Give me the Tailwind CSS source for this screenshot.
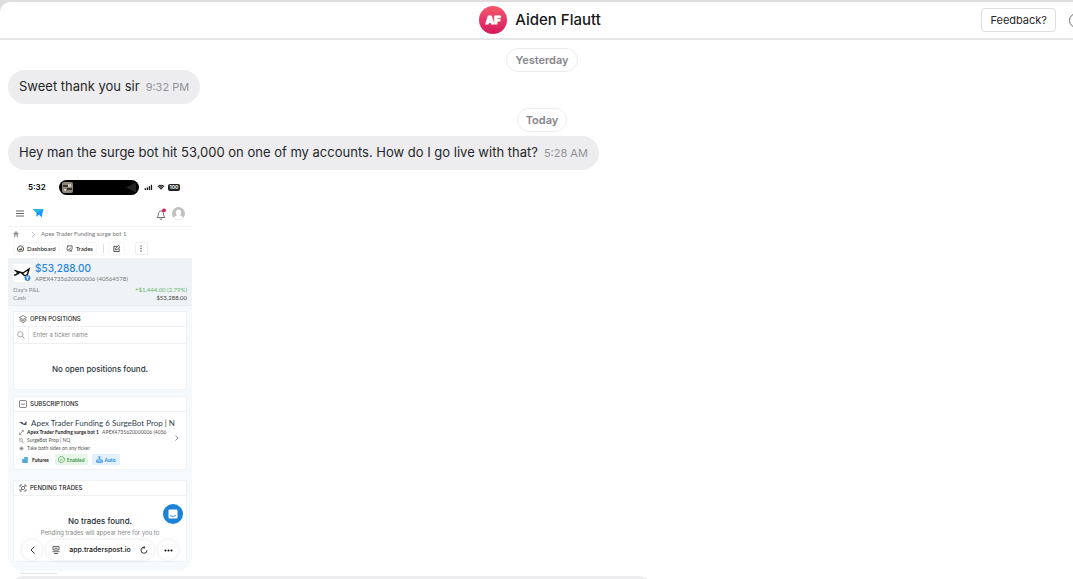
<!DOCTYPE html>
<html lang="en">
<head>
<meta charset="utf-8">
<meta name="viewport" content="width=device-width, initial-scale=1">
<title>Aiden Flautt</title>
<script src="https://cdn.jsdelivr.net/npm/@tailwindcss/browser@4"></script>
</head>
<body class="h-screen overflow-hidden bg-[#dedede] pt-[2px] font-['Inter',sans-serif] text-[#27272a]">
<div class="-mr-[11px] flex h-full flex-col overflow-hidden rounded-tl-[10px] bg-white">
  <header class="grid h-[38px] shrink-0 grid-cols-[1fr_auto_1fr] items-center border-b-2 border-[#e6e6e6]">
    <div></div>
    <div class="flex items-center gap-2 pr-1">
      <svg class="size-7" viewBox="0 0 28 28" role="img" aria-label="AF"><defs><linearGradient id="avatar" x2="0" y2="1"><stop stop-color="#f4586c"/><stop offset="1" stop-color="#d6195f"/></linearGradient></defs><circle cx="14" cy="14" r="14" fill="url(#avatar)"/><text x="14" y="18" text-anchor="middle" font-size="11" font-weight="900" fill="#fff" stroke="#fff" stroke-width=".8" stroke-linejoin="round">AF</text></svg>
      <h1 class="text-[15px] font-medium text-[#18181b]">Aiden Flautt</h1>
    </div>
    <div class="flex items-center justify-end gap-[13px]">
      <button class="h-6 rounded border border-[#dedede] px-2 text-[11px]">Feedback?</button>
      <button aria-label="Information" class="size-[15px] rounded-full border-[1.5px] border-[#707070]"></button>
    </div>
  </header>

  <main class="flex min-h-0 flex-1 flex-col items-start overflow-hidden pt-2 pl-2">
    <div class="flex h-[22px] w-full shrink-0 pr-2"><span class="m-auto flex h-6 items-center rounded-full border border-[#ececec] px-2 text-[11px] font-semibold text-[#85858a]">Yesterday</span></div>
    <div class="flex h-[34px] shrink-0 items-center gap-[6px] rounded-[17px] bg-[#ededef] px-[11px]">
      <p class="text-[13px]">Sweet thank you sir</p><time class="pt-px text-[11px] text-[#929297]">9:32 PM</time>
    </div>
    <div class="mt-1 flex h-7 w-full shrink-0 pr-2"><span class="mx-auto mt-auto mb-1 flex h-6 items-center rounded-full border border-[#ececec] px-2 text-[11px] font-semibold text-[#85858a]">Today</span></div>
    <div class="flex h-[34px] shrink-0 items-center gap-[6px] rounded-[17px] bg-[#ededef] px-[11px]">
      <p class="text-[13px]">Hey man the surge bot hit 53,000 on one of my accounts. How do I go live with that?</p><time class="pt-px text-[11px] text-[#929297]">5:28 AM</time>
    </div>

    <article class="mt-[2px] flex h-[399px] w-[184px] shrink-0 flex-col overflow-hidden rounded-[14px] bg-[#f7fafd] text-[6px] leading-[8px] text-[#555]">
      <div class="bg-white">
        <div class="flex h-[30px] items-center pr-3 pl-5">
          <span class="w-[31px] shrink-0 text-[8px] font-semibold text-black">5:32</span>
          <div class="flex h-[15px] w-20 shrink-0 items-center justify-between rounded-full bg-black px-[3px]">
            <svg class="size-[11px]" viewBox="0 0 11 11"><rect width="11" height="11" rx="2" fill="#8f8779"/><path d="M1 3h5v2H1zM5 6h5v2H5z" fill="#38352f"/><path d="M6 2h3v3H6zM2 7h2v2H2z" fill="#d0c6b5"/></svg>
            <svg class="h-[9px] w-[10px]" viewBox="0 0 10 9" stroke="#555" stroke-width=".8"><path d="M1 4v1M3 3v3M5 2v5M7 1v7M9 0v9"/></svg>
          </div>
          <svg class="ml-[5px] h-[6px] w-[9px] shrink-0" viewBox="0 0 9 7" fill="#111"><path d="M0 5h1.500v2H0zM2.400 4h1.500v3H2.400zM4.800 2.500h1.500v4.500H4.800zM7.200 1h1.500v6H7.200z"/></svg>
          <svg class="ml-1 h-[6px] w-2 shrink-0" viewBox="0 0 8 7"><path d="M0 2.500a5.500 5.500 0 0 1 8 0L4 6.800z" fill="#222"/><path d="M1 3.600a4.300 4.300 0 0 1 6 0M2.300 4.900a2.600 2.600 0 0 1 3.400 0" fill="none" stroke="#fff" stroke-width=".5"/></svg>
          <span class="ml-[3px] flex h-[7px] w-[12px] shrink-0 items-center justify-center rounded-[2px] bg-[#222] text-[5px] font-bold text-white">100</span>
        </div>
        <div class="flex h-[25px] items-center border-b border-[#f2f2f2] pr-[7px] pb-px pl-2">
          <svg class="h-[7px] w-[8px]" viewBox="0 0 8 7" stroke="#555"><path d="M0 1h8M0 3.500h8M0 6h8" stroke-width=".9"/></svg>
          <svg class="ml-[9px] h-[9px] w-[11px]" viewBox="0 0 11 9"><path d="M0 0h10.500L8.500 8.500 6 5.500 3.500 8V4z" fill="#2196f3"/><path d="M0 0h10.500L3.500 4z" fill="#22b8e8"/></svg>
          <svg class="ml-auto h-[12px] w-[11px]" viewBox="0 0 11 12"><path d="M1 9.500c1.200-1 1.200-2 1.400-3.500C2.600 4 3.500 3 5 3s2.500 1 2.600 3c.1 1.500.2 2.500 1.400 3.500zM4 10.500a1 1 0 0 0 2 0" fill="none" stroke="#555" stroke-width=".8"/><circle cx="8" cy="2.300" r="1.900" fill="#e11d55"/></svg>
          <svg class="ml-[5px] size-[13px]" viewBox="0 0 13 13"><circle cx="6.500" cy="6.500" r="6.500" fill="#c1c1c1"/><path d="M6.500 2.500a2.800 3 0 0 1 2 5c-.4.700 0 1.200 1.800 2l.8 1.300a6.500 6.500 0 0 1-9.200 0l.8-1.300c1.800-.8 2.200-1.300 1.800-2a2.800 3 0 0 1 2-5" fill="#fff"/></svg>
        </div>
        <nav class="flex h-[14px] items-center pl-[5px] font-['Lato',sans-serif] text-[#777]">
          <svg class="size-[6px]" viewBox="0 0 6 6"><path d="M0 3l3-3 3 3H5v3H3.700V4H2.300v2H1V3z" fill="#999"/></svg>
          <svg class="ml-[13px] h-[5px] w-[3px]" viewBox="0 0 3 5"><path d="M0 0l2.500 2.500L0 5" fill="none" stroke="#aaa" stroke-width=".7"/></svg>
          <a href="#" class="ml-[6px]">Apex Trader Funding surge bot 1</a>
        </nav>
        <div class="flex h-[17px] items-center pb-[2px] pl-[5px] font-['Lato',sans-serif] font-medium text-[#222]">
          <button class="flex h-[13px] items-center gap-[3px] rounded-xs border border-[#f6f6f6] px-[3px]"><svg class="size-[7px]" viewBox="0 0 8 8"><path d="M1.500 7a3.500 3.500 0 1 1 5 0zM4 5l1.500-2M2 5h4" fill="none" stroke="#222" stroke-width=".9"/></svg>Dashboard</button>
          <button class="ml-[2px] flex h-[13px] items-center gap-[3px] rounded-xs border border-[#f6f6f6] px-[3px]"><svg class="size-[7px]" viewBox="0 0 8 8"><path d="M7 4a3 3 0 1 1-3-3h3v3M1 1h2M5 7h2M2.500 4.500l1 1 2-2.500" fill="none" stroke="#333" stroke-width=".8"/></svg>Trades</button>
          <span class="ml-[6px] h-[9px] w-px bg-[#ddd]"></span>
          <button aria-label="Edit" class="ml-1 flex h-[13px] w-[17px] items-center justify-center rounded-xs border border-[#f6f6f6]"><svg class="size-[7px]" viewBox="0 0 8 8"><path d="M4.500 1.500H1v6h6V4M3 5.500V4l3.500-3.500L8 2 4.500 5.500z" fill="none" stroke="#222" stroke-width=".9"/></svg></button>
          <button aria-label="More" class="ml-[10px] flex h-[13px] w-[13px] items-center justify-center rounded-xs border border-[#eee]"><svg class="h-[7px] w-[2px]" viewBox="0 0 2 7" fill="#444"><circle cx="1" cy="1" r=".7"/><circle cx="1" cy="3.500" r=".7"/><circle cx="1" cy="6" r=".7"/></svg></button>
        </div>
      </div>
      <section class="h-[48px] shrink-0 border-b border-[#e8edf1] bg-[#eff3f6] px-[5px] pt-[4px] font-['Lato',sans-serif]">
        <div class="flex gap-1">
          <div class="mt-[2px] size-[18px] rounded-xs bg-white">
            <svg viewBox="0 0 18 18"><path d="M1 11c3 1 4-4 7-2.500 2 1 3 4 5 3 2-.5 2-3 3-6.500l-6 4-7-2 3 3" fill="none" stroke="#111" stroke-width="1.500"/><circle cx="14.500" cy="14" r="3" fill="#3c87d8"/><path d="M13 13h3M14.500 13v3" stroke="#fff" stroke-width=".8"/></svg>
          </div>
          <div><p class="font-['Inter',sans-serif] text-[10px] leading-[13px] font-medium text-[#2386dc]">$53,288.00</p><p class="text-[#777]">APEX4735620000006 (40564578)</p></div>
        </div>
        <div class="mt-[3px] flex justify-between text-[#888]"><span>Day's P&amp;L</span><span class="text-[#65b56a]">+$1,444.00 (2.79%)</span></div>
        <div class="flex justify-between text-[#888]"><span>Cash</span><span class="text-[#444]">$53,288.00</span></div>
      </section>
      <section class="mx-[5px] mt-[5px] h-[79px] shrink-0 border border-[#eff2f5] bg-white">
        <h2 class="flex h-[15px] items-center gap-[3px] border-b border-[#eef0f2] pl-[5px] font-medium text-[#222]"><svg class="size-2" viewBox="0 0 8 8"><path d="M4 .5l3.500 2L4 4.500.5 2.500zM.5 4L4 6l3.500-2M.5 5.500L4 7.500l3.500-2" fill="none" stroke="#555" stroke-width=".7"/></svg>OPEN POSITIONS</h2>
        <label class="flex h-[17px] items-center border-b border-[#eef0f2] pl-[3px]"><svg class="size-2" viewBox="0 0 8 8"><circle cx="3.300" cy="3.300" r="2.700" fill="none" stroke="#888" stroke-width=".7"/><path d="M5.500 5.500L7.500 7.500" stroke="#888" stroke-width=".8"/></svg><span class="ml-[3px] h-full w-px bg-[#eee]"></span><input aria-label="Ticker name" placeholder="Enter a ticker name" class="ml-1 w-[120px] outline-none placeholder:text-[#8a8a8a]"></label>
        <p class="pt-[20px] text-center text-[8px] leading-[10px] font-medium text-[#2b3440]">No open positions found.</p>
      </section>
      <section class="mx-[5px] mt-[6px] h-[74px] shrink-0 border border-[#eff2f5] bg-white">
        <h2 class="flex h-[15px] items-center gap-[3px] border-b border-[#eef0f2] pl-[5px] font-medium text-[#222]"><svg class="size-2" viewBox="0 0 8 8"><rect x=".5" y=".5" width="7" height="7" rx="1" fill="none" stroke="#555" stroke-width=".7"/><path d="M2 4h1l1 .5L5 4h1" fill="none" stroke="#555" stroke-width=".7"/></svg>SUBSCRIPTIONS</h2>
        <div class="flex items-center pt-[5px] pl-[5px]">
          <div class="w-[156px] whitespace-nowrap font-['Lato',sans-serif] text-[5px]">
            <h3 class="flex h-[11px] items-center gap-[4px] text-[8px] text-[#333f4b]"><svg class="size-2 shrink-0" viewBox="0 0 8 8"><path d="M0 3h3l2 2 2.500-3v4H5L3 5z" fill="#444b55"/></svg>Apex Trader Funding 6 SurgeBot Prop | N</h3>
            <p class="flex h-[8px] items-center gap-[3px]"><svg class="size-[5px] shrink-0" viewBox="0 0 6 6"><path d="M1 5l4-4M3 1l2-.5.5 2M.5 3v2.500H3" fill="none" stroke="#777" stroke-width=".8"/></svg><b class="font-bold text-[#222]">Apex Trader Funding surge bot 1</b><span>APEX4735620000006 (4056</span></p>
            <p class="flex h-[8px] items-center gap-[3px]"><svg class="size-[5px] shrink-0" viewBox="0 0 6 6"><path d="M0 1h4v4h2M1 0v4h3" fill="none" stroke="#999" stroke-width=".8"/></svg>SurgeBot Prop | NQ</p>
            <p class="flex h-[8px] items-center gap-[3px]"><svg class="size-[5px] shrink-0" viewBox="0 0 6 6"><circle cx="3" cy="3" r="2.500" fill="#bbb"/><path d="M1 3h4M3 1v4" stroke="#777" stroke-width=".6"/></svg>Take both sides on any ticker</p>
          </div>
          <svg class="mt-[7px] h-[6px] w-[4px]" viewBox="0 0 4 6"><path d="M.5.5L3 3 .5 5.500" fill="none" stroke="#777" stroke-width=".8"/></svg>
        </div>
        <div class="mt-[2px] flex gap-1 pl-[6px] font-['Lato',sans-serif] text-[5px] font-bold">
          <span class="flex h-[11px] items-center gap-[3px] rounded-xs bg-[#fafafa] px-[2px] text-[#222]"><svg class="size-[7px]" viewBox="0 0 7 7"><path d="M0 3h2V1h4v6H0z" fill="#6fbde9"/><path d="M2 3v4M4 1v6" stroke="#277ca9" stroke-width=".6"/></svg>Futures</span>
          <span class="flex h-[11px] items-center gap-[2px] rounded-xs bg-[#e8f6ea] px-[3px] text-[#3e9c49]"><svg class="size-[7px]" viewBox="0 0 8 8"><path d="M4 .5a3.500 3.500 0 1 1-.1 0M2.300 4l1.200 1.200L5.700 3" fill="none" stroke="#3e9c49" stroke-width=".8"/></svg>Enabled</span>
          <span class="flex h-[11px] items-center gap-[2px] rounded-xs bg-[#e2f1fd] px-[4px] text-[#2386dc]"><svg class="size-[7px]" viewBox="0 0 8 8"><path d="M2 3.500h4V7H2zM4 3.500V1M.5 4.500V7h7V4.500M2.500 1h3M3.300 5v1M4.700 5v1" fill="none" stroke="#2386dc" stroke-width=".8"/></svg>Auto</span>
        </div>
      </section>
      <section class="relative mx-[5px] mt-[10px] h-[82px] shrink-0 border border-[#eff2f5] bg-white">
        <h2 class="flex h-[15px] items-center gap-[3px] border-b border-[#eef0f2] pl-[5px] font-medium text-[#222]"><svg class="size-2" viewBox="0 0 8 8"><path d="M3 1H1v2M5 1h2v2M7 5v2H5M3 7H1V5M3 2.500h2.500V5M5 5.500H2.500V3" fill="none" stroke="#555" stroke-width=".8"/></svg>PENDING TRADES</h2>
        <p class="pt-[20px] text-center text-[8px] leading-[10px] font-medium text-[#222b35]">No trades found.</p>
        <p class="mt-[3px] text-center text-[#888]">Pending trades will appear here for you to</p>
        <button aria-label="Open chat" class="absolute top-[23px] right-[3px] flex size-5 items-center justify-center rounded-full bg-[#1b82d8]"><svg class="size-[10px]" viewBox="0 0 10 10"><rect x=".5" y=".5" width="9" height="9" rx="1" fill="#fff"/><path d="M2 6.500q3 2 6 0" fill="none" stroke="#1b82d8" stroke-width=".8"/></svg></button>
        <div class="absolute inset-x-[8px] bottom-px flex h-5 items-center justify-between text-[7px] font-medium text-[#111]">
          <button aria-label="Back" class="flex size-5 items-center justify-center rounded-full bg-white shadow-[0_0_4px_#0000001a]"><svg class="h-2 w-[5px]" viewBox="0 0 5 8"><path d="M4.500.5L1 4l3.500 3.500" fill="none" stroke="#222" stroke-width=".9"/></svg></button>
          <div class="flex h-5 w-[108px] items-center justify-between rounded-full bg-white px-[6px] shadow-[0_0_4px_#0000001a]"><svg class="size-2" viewBox="0 0 8 8"><path d="M1 .5h6v3.500H1zM.5 5.700h7M2 7.500h4M2.500 2.300h3" fill="none" stroke="#222" stroke-width=".7"/></svg><span>app.traderspost.io</span><svg class="size-2" viewBox="0 0 8 8"><path d="M7 4.300A3 3 0 1 1 4.500 1.300M3.500 0L5 1.400 3.600 3" fill="none" stroke="#222" stroke-width=".9"/></svg></div>
          <button aria-label="More options" class="flex size-5 items-center justify-center rounded-full bg-white shadow-[0_0_4px_#0000001a]"><svg class="h-[3px] w-[9px]" viewBox="0 0 9 3"><circle cx="1.500" cy="1.500" r="1"/><circle cx="4.500" cy="1.500" r="1"/><circle cx="7.500" cy="1.500" r="1"/></svg></button>
        </div>
      </section>
    </article>
    <div class="mt-[2px] ml-3 h-px w-[37px] shrink-0 bg-[#e4e4e6]"></div>
    <div class="mt-[2px] h-[34px] w-[647px] shrink-0 rounded-[17px] bg-[#ededef]"></div>
  </main>
</div>
</body>
</html>
